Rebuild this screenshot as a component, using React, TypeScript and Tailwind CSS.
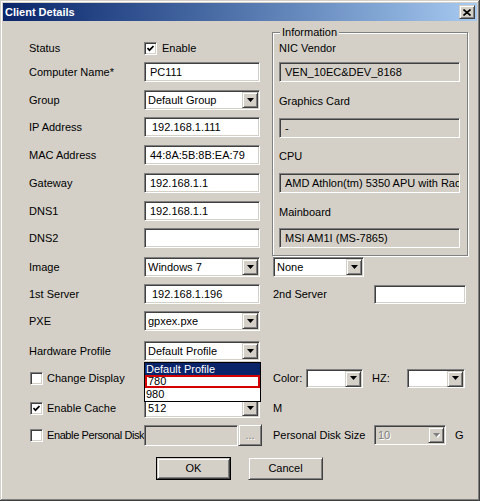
import React from 'react';

const sunken =
  'border border-t-[#808080] border-l-[#808080] border-r-white border-b-white shadow-[inset_1px_1px_0_#404040,inset_-1px_-1px_0_#d4d0c8]';
const raised =
  'border border-t-[#d4d0c8] border-l-[#d4d0c8] border-r-[#404040] border-b-[#404040] shadow-[inset_1px_1px_0_#ffffff,inset_-1px_-1px_0_#808080]';

const Arrow = ({ disabled }: { disabled?: boolean }) => (
  <div className={`${raised} bg-[#d4d0c8] w-[16px] h-[16px] flex items-center justify-center shrink-0`}>
    <svg width="7" height="5" viewBox="0 0 7 5">
      {disabled && <polygon points="1,1 8,1 4.5,5" fill="#ffffff" />}
      <polygon points="0,0 7,0 3.5,4" fill={disabled ? '#808080' : '#000000'} />
    </svg>
  </div>
);

const Combo = ({
  value,
  className,
  disabled,
  children,
}: {
  value: string;
  className: string;
  disabled?: boolean;
  children?: React.ReactNode;
}) => (
  <div className={`relative ${className}`}>
    <div
      className={`${sunken} ${disabled ? 'bg-[#d4d0c8]' : 'bg-white'} h-full w-full flex items-center pl-[3px] pr-[1px]`}
    >
      <span
        className={`flex-1 overflow-hidden whitespace-nowrap ${disabled ? 'text-[#808080] [text-shadow:1px_1px_0_#ffffff]' : ''}`}
      >
        {value}
      </span>
      <Arrow disabled={disabled} />
    </div>
    {children}
  </div>
);

const TextBox = ({ value, className, readOnly }: { value?: string; className: string; readOnly?: boolean }) => (
  <div
    className={`${sunken} ${readOnly ? 'bg-[#d4d0c8] pl-[5px]' : 'bg-white pl-[5px]'} flex items-center overflow-hidden whitespace-nowrap ${className}`}
  >
    {value}
  </div>
);

const Check = ({ checked }: { checked?: boolean }) => (
  <div className={`${sunken} bg-white w-[13px] h-[13px] flex items-center justify-center shrink-0`}>
    {checked && (
      <svg width="7" height="7" viewBox="0 0 7 7">
        <polyline points="0.5,3 2.5,5.2 6.5,1" fill="none" stroke="#000" strokeWidth="1.7" />
      </svg>
    )}
  </div>
);

const Label = ({ children, className = 'w-[115px]' }: { children: React.ReactNode; className?: string }) => (
  <div className={`shrink-0 whitespace-nowrap ${className}`}>{children}</div>
);

const CheckLabel = ({ checked, text, tight }: { checked?: boolean; text: string; tight?: boolean }) => (
  <div className="w-[115px] shrink-0 flex items-center overflow-hidden whitespace-nowrap">
    <div className="ml-[1px]">
      <Check checked={checked} />
    </div>
    <span className={`ml-[4px] ${tight ? 'tracking-[-0.4px]' : ''}`}>{text}</span>
  </div>
);

export default function App() {
  return (
    <div
      className="relative w-[480px] h-[501px] bg-[#d4d0c8] text-[11px] text-black shadow-[inset_-1px_-1px_0_#404040,inset_1px_1px_0_#d4d0c8,inset_-2px_-2px_0_#808080,inset_2px_2px_0_#ffffff] overflow-hidden"
      style={{ fontFamily: '"Liberation Sans", Arial, sans-serif' }}
    >
      {/* title bar */}
      <div className="mx-[3px] pt-[3px]">
        <div className="h-[18px] bg-gradient-to-r from-[#0a246a] to-[#a6caf0] flex items-center pl-[2px] pr-[2px]">
          <span className="text-white font-bold text-[11px]">Client Details</span>
          <div className={`${raised} bg-[#d4d0c8] ml-auto w-[16px] h-[14px] flex items-center justify-center`}>
            <svg width="8" height="7" viewBox="0 0 8 7">
              <path d="M0.5 0.5 L7.5 6.5 M7.5 0.5 L0.5 6.5" stroke="#000" strokeWidth="1.6" />
            </svg>
          </div>
        </div>
      </div>

      {/* top section */}
      <div className="flex pl-[29px] pt-[12px]">
        <div className="w-[231px] flex flex-col pt-[5px]">
          <div className="h-[20px] flex items-center">
            <Label>Status</Label>
            <Check checked />
            <span className="ml-[5px]">Enable</span>
          </div>
          <div className="h-[20px] flex items-center mt-[4px]">
            <Label>Computer Name*</Label>
            <TextBox value="PC111" className="w-[116px] h-[20px]" />
          </div>
          <div className="h-[20px] flex items-center mt-[8px]">
            <Label>Group</Label>
            <Combo value="Default Group" className="w-[116px] h-[20px]" />
          </div>
          <div className="h-[20px] flex items-center mt-[7px]">
            <Label>IP Address</Label>
            <TextBox value="192.168.1.111" className="w-[116px] h-[20px] pl-[7px]" />
          </div>
          <div className="h-[20px] flex items-center mt-[8px]">
            <Label>MAC Address</Label>
            <TextBox value="44:8A:5B:8B:EA:79" className="w-[116px] h-[20px]" />
          </div>
          <div className="h-[20px] flex items-center mt-[8px]">
            <Label>Gateway</Label>
            <TextBox value="192.168.1.1" className="w-[116px] h-[20px]" />
          </div>
          <div className="h-[20px] flex items-center mt-[8px]">
            <Label>DNS1</Label>
            <TextBox value="192.168.1.1" className="w-[116px] h-[20px]" />
          </div>
          <div className="h-[20px] flex items-center mt-[7px]">
            <Label>DNS2</Label>
            <TextBox className="w-[116px] h-[20px]" />
          </div>
        </div>

        {/* information group */}
        <div className="relative ml-[12px] mt-[-1px] w-[196px] h-[224px] border border-[#808080] shadow-[inset_1px_1px_0_#ffffff,1px_1px_0_#ffffff] flex flex-col pl-[6px]">
          <span className="absolute left-[7px] top-[-8px] bg-[#d4d0c8] px-[2px] leading-[14px]">Information</span>
          <div className="h-[14px] leading-[14px] mt-[8px]">NIC Vendor</div>
          <TextBox readOnly value="VEN_10EC&DEV_8168" className="w-[181px] h-[20px] mt-[7px]" />
          <div className="h-[14px] leading-[14px] mt-[12px]">Graphics Card</div>
          <TextBox readOnly value="-" className="w-[181px] h-[20px] mt-[10px]" />
          <div className="h-[14px] leading-[14px] mt-[11px]">CPU</div>
          <TextBox readOnly value="AMD Athlon(tm) 5350 APU with Radeon(tm) R3" className="w-[181px] h-[20px] mt-[10px]" />
          <div className="h-[14px] leading-[14px] mt-[12px]">Mainboard</div>
          <TextBox readOnly value="MSI AM1I (MS-7865)" className="w-[181px] h-[20px] mt-[9px]" />
        </div>
      </div>

      {/* bottom rows */}
      <div className="flex flex-col pl-[29px]">
        <div className="h-[20px] flex items-center mt-[1px]">
          <Label>Image</Label>
          <Combo value="Windows 7" className="w-[116px] h-[20px]" />
          <Combo value="None" className="w-[91px] h-[20px] ml-[13px]" />
        </div>
        <div className="h-[20px] flex items-center mt-[7px]">
          <Label>1st Server</Label>
          <TextBox value="192.168.1.196" className="w-[116px] h-[20px] pl-[7px]" />
          <Label className="w-[101px] ml-[13px]">2nd Server</Label>
          <TextBox className="w-[92px] h-[19px]" />
        </div>
        <div className="h-[20px] flex items-center mt-[7px]">
          <Label>PXE</Label>
          <Combo value="gpxex.pxe" className="w-[116px] h-[20px]" />
        </div>
        <div className="relative z-10 h-[20px] flex items-center mt-[10px]">
          <Label>Hardware Profile</Label>
          <Combo value="Default Profile" className="w-[116px] h-[20px]">
            <div className="absolute left-0 top-[21px] w-[117px] border border-black bg-white leading-[12px]">
              <div className="h-[12px] bg-[#0a246a] text-white pl-[1px]">Default Profile</div>
              <div className="h-[13px] border-2 border-[#d40000] pl-[1px] leading-[9px]">780</div>
              <div className="h-[13px] pl-[1px] leading-[13px]">980</div>
            </div>
          </Combo>
        </div>
        <div className="h-[19px] flex items-center mt-[8px]">
          <CheckLabel text="Change Display" />
          <div className="w-[116px] shrink-0" />
          <Label className="w-[33px] ml-[13px]">Color:</Label>
          <Combo value="" className="w-[57px] h-[19px]" />
          <Label className="w-[35px] ml-[9px]">HZ:</Label>
          <Combo value="" className="w-[58px] h-[19px]" />
        </div>
        <div className="h-[20px] flex items-center mt-[10px]">
          <CheckLabel checked text="Enable Cache" />
          <Combo value="512" className="w-[116px] h-[20px]" />
          <span className="ml-[13px]">M</span>
        </div>
        <div className="h-[22px] flex items-center mt-[6px]">
          <CheckLabel tight text="Enable Personal Disk" />
          <TextBox readOnly className="w-[94px] h-[21px]" />
          <div
            className={`${raised} bg-[#d4d0c8] w-[24px] h-[22px] flex items-center justify-center text-[#808080] [text-shadow:1px_1px_0_#ffffff]`}
          >
            ...
          </div>
          <Label className="w-[101px] ml-[11px]">Personal Disk Size</Label>
          <Combo disabled value="10" className="w-[72px] h-[20px]" />
          <span className="ml-[9px]">G</span>
        </div>
        <div className="flex pl-[127px] gap-[17px] mt-[11px]">
          <div className="border border-black">
            <div className={`${raised} bg-[#d4d0c8] w-[73px] h-[21px] flex items-center justify-center`}>OK</div>
          </div>
          <div className={`${raised} bg-[#d4d0c8] w-[75px] h-[23px] flex items-center justify-center`}>Cancel</div>
        </div>
      </div>
    </div>
  );
}
